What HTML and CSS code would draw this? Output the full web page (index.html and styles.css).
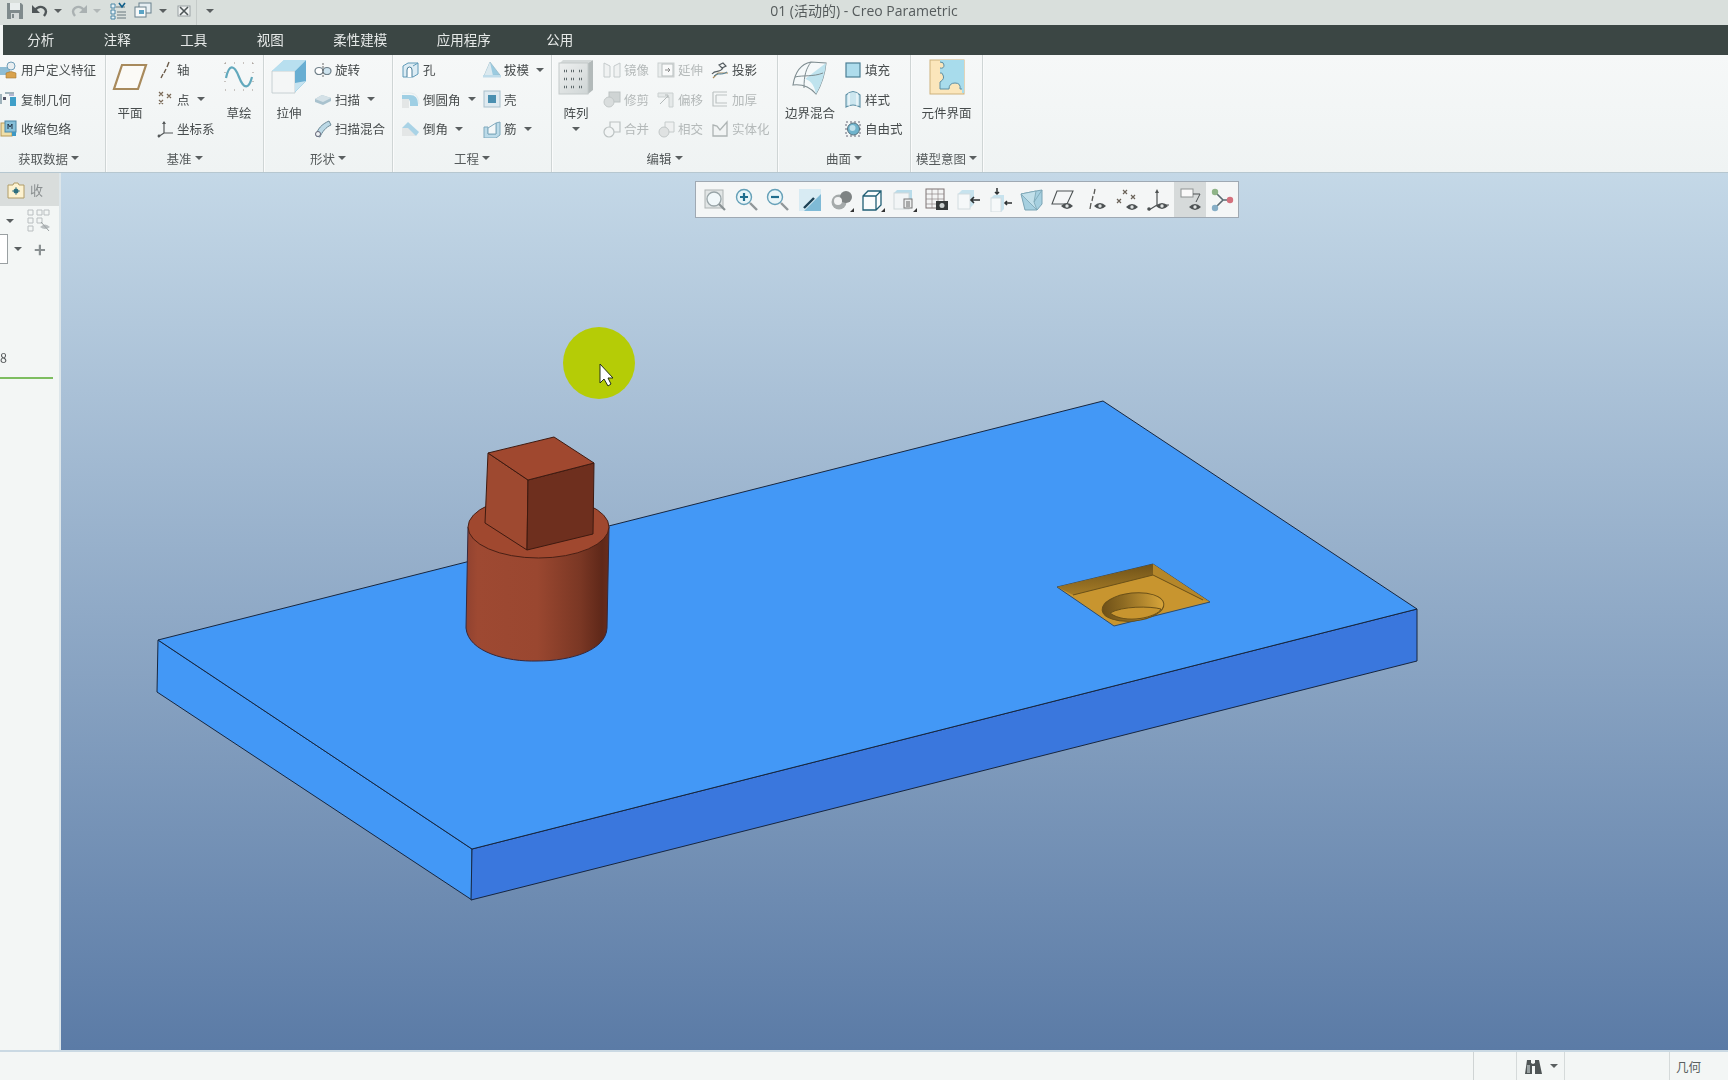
FILE: index.html
```html
<!DOCTYPE html>
<html lang="zh">
<head>
<meta charset="utf-8">
<title>01 (活动的) - Creo Parametric</title>
<link rel="stylesheet" href="styles.css">
</head>
<body>
<svg class="sprite" xmlns="http://www.w3.org/2000/svg">
  <defs>
    <linearGradient id="cyl" x1="0" x2="1" y1="0" y2="0">
      <stop offset="0" stop-color="#904230"/><stop offset=".08" stop-color="#9e4932"/><stop offset=".5" stop-color="#9a4730"/><stop offset=".8" stop-color="#7a3724"/><stop offset=".95" stop-color="#5f2819"/><stop offset="1" stop-color="#682c1c"/>
    </linearGradient>
    <linearGradient id="hole" x1="0" x2="1" y1="0" y2="0">
      <stop offset="0" stop-color="#6e5018"/><stop offset=".35" stop-color="#8d6a22"/><stop offset="1" stop-color="#d8a53a"/>
    </linearGradient>
    <linearGradient id="wall" x1="0" x2="0" y1="0" y2="1">
      <stop offset="0" stop-color="#6f5219"/><stop offset="1" stop-color="#a67c26"/>
    </linearGradient>
    <linearGradient id="patside" x1="0" x2="1" y1="0" y2="1">
      <stop offset="0" stop-color="#eef0f0"/><stop offset="1" stop-color="#cfd5d5"/>
    </linearGradient>
  </defs>
  <symbol id="i-user" viewBox="0 0 18 18"><rect x="0" y="6" width="10" height="8" fill="#8fbdd4"/><circle cx="11" cy="5" r="4" fill="#e9eef0" stroke="#6f9db8"/><path d="M6 17v-5q5-3 10 0v5z" fill="#d9a24c" stroke="#a67a38" stroke-width=".6"/></symbol>
  <symbol id="i-copy" viewBox="0 0 18 18"><path d="M1 4v10M5 3h9" stroke="#4a6e80" fill="none"/><rect x="3" y="7" width="3" height="3" fill="#556"/><rect x="10" y="7" width="6" height="9" fill="#3f9fc8"/><path d="M9 5h5" stroke="#77a" /></symbol>
  <symbol id="i-shrink" viewBox="0 0 18 18"><rect x="1" y="3" width="11" height="13" fill="#f0dfa8" stroke="#b89a58"/><rect x="5" y="1" width="11" height="11" fill="#86bfd8" stroke="#4a87a8"/><path d="M8 9V4l2 3 2-3v5" stroke="#234" fill="none"/><rect x="12" y="12" width="4" height="4" fill="#3d98c4"/></symbol>
  <symbol id="i-plane" viewBox="0 0 36 36"><path d="M10 6h24l-8 24H2z" fill="#fbfaf6" stroke="#a88a5c" stroke-width="2.2"/></symbol>
  <symbol id="i-axis" viewBox="0 0 18 18"><path d="M13 1l-2 5M10 8l-2 4M7 13l-2 4" stroke="#6a5a48" stroke-width="1.4"/></symbol>
  <symbol id="i-point" viewBox="0 0 18 18"><path d="M3 2l4 4M7 2l-4 4M11 4l4 4M15 4l-4 4M3 10l4 4M7 10l-4 4" stroke="#7a6a58" stroke-width="1.2"/></symbol>
  <symbol id="i-csys" viewBox="0 0 18 18"><path d="M8 2v11M8 13l9-0M8 13l-6 4" stroke="#55595a" stroke-width="1.2" fill="none"/><path d="M6 4l2-3 2 3z" fill="#55595a"/><circle cx="3" cy="16" r="1.4" fill="#55595a"/></symbol>
  <symbol id="i-sketch" viewBox="0 0 36 36"><path d="M5 19C8 5 13 5 18 18s10 12 13 0" fill="none" stroke="#62a9bd" stroke-width="2.2"/><path d="M4 4h28M4 31h28" stroke="#9a8f88" stroke-width="1" stroke-dasharray="1 8"/><path d="M4 4v27M32 4v27" stroke="#9a8f88" stroke-width="1" stroke-dasharray="1 8"/></symbol>
  <symbol id="i-extrude" viewBox="0 0 36 36"><path d="M1 12L13 1h22v21L24 33z" fill="#a9d6ea"/><path d="M1 12h23v22H1z" fill="#f4f6f6" stroke="#bcc8cc" stroke-width=".8"/><path d="M24 12L35 1v21L24 33z" fill="#68aed2"/><path d="M24 24l11-2-11 11z" fill="#c6e3f0"/><path d="M1 12L13 1h22L24 12z" fill="#b8dfef"/></symbol>
  <symbol id="i-revolve" viewBox="0 0 18 18"><ellipse cx="5" cy="10" rx="4" ry="3.5" fill="#fff" stroke="#6f7f88" stroke-width="1.2"/><ellipse cx="13" cy="10" rx="4" ry="3.5" fill="#cde3ee" stroke="#6f7f88" stroke-width="1.2"/><path d="M9 2v14" stroke="#666" stroke-dasharray="2 1"/></symbol>
  <symbol id="i-sweep" viewBox="0 0 18 18"><path d="M1 9l7-4 9 3v3l-8 4-8-3z" fill="#a9c2ce"/><path d="M1 9l8 3 8-4-9-3z" fill="#d4e1e7"/></symbol>
  <symbol id="i-blend" viewBox="0 0 18 18"><path d="M2 16C3 9 8 4 15 1l2 4C12 7 8 12 6 17z" fill="#bcd9e6" stroke="#6d8a98"/><circle cx="4" cy="14" r="2.5" fill="#eef3f5" stroke="#667"/></symbol>
  <symbol id="i-hole" viewBox="0 0 18 18"><path d="M1 5l5-3h10v11l-5 3H1z" fill="#dcecf4" stroke="#5f9ab8"/><path d="M5 16V9q0-3 2.500-3T10 9v7" fill="#fff" stroke="#4b7f9a"/><path d="M11 5l5-3" stroke="#5f9ab8"/></symbol>
  <symbol id="i-draft" viewBox="0 0 18 18"><path d="M1 15L7 1l10 13z" fill="#9bcbe0" stroke="#8db0c0" stroke-width=".6"/><path d="M7 1l3 14H1z" fill="#dbe9ef"/><rect x="0" y="14" width="18" height="2.500" fill="#bfdcea"/></symbol>
  <symbol id="i-round" viewBox="0 0 18 18"><path d="M0 5h8q8 0 8 9v2H8V12Q8 9 4 9H0z" fill="#9fcfe4"/><path d="M0 9h7v9H0z" fill="#e3e6e6"/><path d="M0 3h9q8 1 8 11" fill="none" stroke="#e4ecee"/></symbol>
  <symbol id="i-shell" viewBox="0 0 18 18"><rect x="1" y="1" width="16" height="16" fill="#dfeaf0" stroke="#a9c0cc"/><rect x="5" y="5" width="8" height="8" fill="#4a8fb0"/></symbol>
  <symbol id="i-chamfer" viewBox="0 0 18 18"><path d="M0 8l6-6 11 10-3 4z" fill="#a9d3e6"/><path d="M0 8h6l8 8H0z" fill="#e3e6e6"/></symbol>
  <symbol id="i-rib" viewBox="0 0 18 18"><path d="M1 7h4v7h8V3l4-1v13l-4 3H1z" fill="#bcdbe9" stroke="#7fa9bd"/><path d="M5 14V8l8-5v11z" fill="#f3f7f8" stroke="#7fa9bd"/></symbol>
  <symbol id="i-pattern" viewBox="0 0 36 36"><path d="M30 4l5-3v30l-5 4z" fill="#b3baba"/><path d="M2 4l3-3h30l-5 3z" fill="#d4d9d9"/><rect x="1" y="4" width="29" height="31" fill="url(#patside)" stroke="#c4caca"/><path d="M6 12h4M13 12h4M21 12h4M6 20h4M13 20h4M21 20h4M6 28h4M13 28h4M21 28h4" stroke="#5f6a6c" stroke-width="2.400" stroke-dasharray="1 1"/></symbol>
  <symbol id="i-mirror" viewBox="0 0 18 18"><path d="M1 2l6 3v11H1zM17 2l-6 3v11h6z" fill="#f0f2f2" stroke="#bcc3c4"/></symbol>
  <symbol id="i-trim" viewBox="0 0 18 18"><rect x="6" y="2" width="11" height="10" fill="#c9cfcf" stroke="#b3baba"/><circle cx="6" cy="12" r="5" fill="#d5d9d9" stroke="#b9bfbf"/></symbol>
  <symbol id="i-merge" viewBox="0 0 18 18"><path d="M7 2h10v10H7z" fill="#f3f5f5" stroke="#b3baba" stroke-width="1.2"/><circle cx="6" cy="12" r="5" fill="#f3f5f5" stroke="#b3baba" stroke-width="1.2"/></symbol>
  <symbol id="i-extend" viewBox="0 0 18 18"><rect x="1" y="2" width="16" height="14" fill="#e9ecec" stroke="#c3c9c9"/><rect x="5" y="3" width="11" height="12" fill="#fafbfb" stroke="#aeb5b5"/><path d="M8 9h5M11 7l2 2-2 2" stroke="#777" fill="none"/></symbol>
  <symbol id="i-offset" viewBox="0 0 18 18"><path d="M1 3h15v14h-4V7H1z" fill="#e3e7e7" stroke="#c3c9c9"/><path d="M3 14l8-8M8 5h3v3" stroke="#aab0b0" fill="none"/></symbol>
  <symbol id="i-inter" viewBox="0 0 18 18"><path d="M8 2h9v10H8z" fill="#eef0f0" stroke="#bec4c4"/><circle cx="7" cy="12" r="5" fill="#dcdfdf" stroke="#b9bfbf"/></symbol>
  <symbol id="i-project" viewBox="0 0 18 18"><path d="M2 17l5-5h10" fill="none" stroke="#a88a5c" stroke-width="1.200"/><path d="M1 13C5 8 8 13 12 7M8 4l4-2 3 3-4 2z" fill="none" stroke="#545c60" stroke-width="1.200"/><path d="M3 15C7 11 10 15 16 11" fill="none" stroke="#4d7e98"/></symbol>
  <symbol id="i-thick" viewBox="0 0 18 18"><path d="M2 2h14M2 2v14h14M5 5h11M5 5v8h11" fill="none" stroke="#b3baba" stroke-width="1.200"/></symbol>
  <symbol id="i-solid" viewBox="0 0 18 18"><path d="M2 5l4 1 3 4 7-8v14H2z" fill="#f2f4f4" stroke="#a2a9a9" stroke-width="1.300"/></symbol>
  <symbol id="i-boundary" viewBox="0 0 36 36"><path d="M1 26C3 13 9 5 19 3l15 1c-1 10-4 21-10 31-6-7-14-10-23-9z" fill="#f5f9fa" stroke="#7e8c90" stroke-width="1.100"/><path d="M13 20c4 1 9 4 11 15 6-10 9-21 10-31z" fill="#bfe3ee"/><path d="M19 3C14 10 12 16 12 29M3 18c8-2 18 0 28-4" fill="none" stroke="#7e8c90" stroke-width="1"/></symbol>
  <symbol id="i-fill" viewBox="0 0 18 18"><rect x="2" y="2" width="14" height="14" fill="#aedcec" stroke="#4b7f95" stroke-width="1.200"/></symbol>
  <symbol id="i-style" viewBox="0 0 18 18"><path d="M2 5q7-7 14 0v12q-7-4-14 0z" fill="#cce6ef" stroke="#5c8ea4" stroke-width="1.100"/><path d="M5 3v13M13 3v13" stroke="#fff"/></symbol>
  <symbol id="i-free" viewBox="0 0 18 18"><rect x="2" y="2" width="14" height="14" fill="none" stroke="#667" stroke-dasharray="2 2"/><circle cx="9.500" cy="9" r="6" fill="#6fb3cc" stroke="#54707d"/><circle cx="8.500" cy="8" r="3" fill="#bfe1ec"/></symbol>
  <symbol id="i-comp" viewBox="0 0 36 36"><rect x="1" y="1" width="34" height="34" fill="#fbe6bb" stroke="#cdb27c"/><path d="M11 1H35V34H33V30H31q1-6-5-6t-6 6H11V23q5-3 3-7-1-3-3-2V9q4 1 4-3-1-3-4-3z" fill="#a8dcec"/><path d="M11 3q4 0 4 3 0 4-4 3M11 14q2-1 3 2 2 4-3 7v7h9q0-6 6-6t5 6h2" fill="none" stroke="#5c8ea4"/></symbol>
  <symbol id="i-save" viewBox="0 0 18 18"><path d="M1 1h14l2 2v14H1z" fill="#7f8a8c"/><rect x="4" y="1" width="10" height="7" fill="#e9eeee"/><rect x="5" y="11" width="8" height="6" fill="#d4d9d9"/><rect x="6" y="12" width="2" height="4" fill="#7f8a8c"/></symbol>
  <symbol id="i-undo" viewBox="0 0 18 18"><path d="M4 8q4-5 9-2 4 3 0 8" fill="none" stroke="#4f5658" stroke-width="2.400"/><path d="M1 3v8h8z" fill="#4f5658"/></symbol>
  <symbol id="i-redo" viewBox="0 0 18 18"><path d="M14 8q-4-5-9-2-4 3 0 8" fill="none" stroke="#aab1b2" stroke-width="2.400"/><path d="M17 3v8H9z" fill="#aab1b2"/></symbol>
  <symbol id="i-regen" viewBox="0 0 18 18"><path d="M2 2h4v4H2zM2 8h4v4H2zM2 14h4v3H2z" fill="#e8f2f7" stroke="#4b86a6"/><path d="M7 5h9M8 10h9M8 13h9M8 16h9" stroke="#68797f"/><path d="M10 1l3 4 3-4" stroke="#0f5e8a" stroke-width="1.600" fill="none"/></symbol>
  <symbol id="i-windows" viewBox="0 0 18 18"><rect x="5" y="1" width="12" height="10" fill="#e6eef2" stroke="#69808c"/><rect x="1" y="5" width="11" height="10" fill="#f7f9f9" stroke="#69808c"/><rect x="5" y="8" width="5" height="4" fill="#5aa3c5"/></symbol>
  <symbol id="i-close" viewBox="0 0 18 18"><rect x="3" y="4" width="12" height="10" fill="#eef1f1" stroke="#9aa1a3"/><path d="M5 5l8 8M13 5l-8 8" stroke="#4e5658" stroke-width="1.600"/></symbol>
  <symbol id="i-folder" viewBox="0 0 18 18"><path d="M1 4h5l1-2h4l1 2h5v13H1z" fill="#fdf2d0" stroke="#b09c68"/><circle cx="9" cy="10" r="2.500" fill="#2f6f7e"/><path d="M9 6v8M5 10h8" stroke="#2f6f7e" stroke-width=".8"/></symbol>
  <symbol id="i-tree" viewBox="0 0 24 24"><path d="M2 1h5v5H2zM2 9h5v5H2zM2 17h5v5H2zM11 1h5v5h-5zM18 1h5v5h-5zM11 9h5v5h-5z" fill="none" stroke="#b9bec0"/><path d="M14 18q5-5 10 0-5 4-10 0z" fill="#b9bec0"/><path d="M15 13l8 9" stroke="#9aa0a2"/></symbol>
  <symbol id="i-bino" viewBox="0 0 18 18"><path d="M3 3h4v3l2 1 2-1V3h4l3 14h-7V9H8v8H1z" fill="#4f5556"/><path d="M3 8h3v8H3z" fill="#9aa2a3"/></symbol>
  <symbol id="t-eye" viewBox="0 0 12 8"><path d="M0 4q6-6 12 0-6 6-12 0z" fill="#4c5152"/><circle cx="6" cy="4" r="1.700" fill="#dfe3e3"/></symbol>
  <symbol id="t-refit" viewBox="0 0 24 24"><rect x="2" y="2" width="18" height="18" fill="#e2e6e6" stroke="#aeb4b4"/><circle cx="11" cy="11" r="7" fill="#f1f8fa" stroke="#99a5a8" stroke-width="1.300"/><path d="M16 16l6 6" stroke="#8a9294" stroke-width="2.200"/></symbol>
  <symbol id="t-zin" viewBox="0 0 24 24"><circle cx="9" cy="9" r="7.500" fill="#e9f5f8" stroke="#65a0b8" stroke-width="1.400"/><path d="M5 9h8M9 5v8" stroke="#216e8e" stroke-width="2.200"/><path d="M15 15l7 7" stroke="#909799" stroke-width="2.400"/></symbol>
  <symbol id="t-zout" viewBox="0 0 24 24"><circle cx="9" cy="9" r="7.500" fill="#e9f5f8" stroke="#65a0b8" stroke-width="1.400"/><path d="M5 9h8" stroke="#216e8e" stroke-width="2.200"/><path d="M15 15l7 7" stroke="#909799" stroke-width="2.400"/></symbol>
  <symbol id="t-repaint" viewBox="0 0 24 24"><rect x="1" y="1" width="22" height="22" fill="#7fbad6"/><path d="M1 1h22v5L6 23H1z" fill="#d8ebf3"/><path d="M6 20l10-10" stroke="#1d4154" stroke-width="2.400"/></symbol>
  <symbol id="t-shade" viewBox="0 0 24 24"><circle cx="9" cy="14" r="7.500" fill="#a5aaaa"/><circle cx="16" cy="9" r="6" fill="#7e8383"/><circle cx="8" cy="13" r="4" fill="#f2f3f3"/><path d="M24 20v4h-4z" fill="#333"/></symbol>
  <symbol id="t-cube" viewBox="0 0 24 24"><path d="M2 8l5-5h13v14l-5 5H2zM2 8h13v14M15 8l5-5" fill="#fafcfc" stroke="#215f75" stroke-width="1.300"/><path d="M24 20v4h-4z" fill="#333"/></symbol>
  <symbol id="t-saved" viewBox="0 0 24 24"><path d="M1 5l3-3h15v16H1z" fill="#b9dcea"/><rect x="1" y="5" width="15" height="16" fill="#f2f5f6" stroke="#cfd8da"/><rect x="11" y="11" width="8" height="9" fill="#eceeee" stroke="#777"/><path d="M13 14h4M13 16h4M13 18h4" stroke="#666"/><path d="M24 20v4h-4z" fill="#333"/></symbol>
  <symbol id="t-table" viewBox="0 0 24 24"><rect x="1" y="1" width="18" height="19" fill="#f3f4f4" stroke="#7c7272"/><path d="M1 6h18M1 11h18M1 16h18M7 1v19M13 1v19" stroke="#8c8484" stroke-width=".7"/><rect x="11" y="13" width="12" height="9" fill="#35393a"/><circle cx="17" cy="17.500" r="2.500" fill="#cbd0d0"/></symbol>
  <symbol id="t-view1" viewBox="0 0 24 24"><path d="M2 6l4-4h12v14l-4 4H2z" fill="#c7e3ee"/><rect x="2" y="6" width="12" height="15" fill="#f5f8f9" stroke="#d2dcdf"/><path d="M24 12h-9M18 9l-3 3 3 3" stroke="#2d3132" stroke-width="1.600" fill="none"/></symbol>
  <symbol id="t-view2" viewBox="0 0 24 24"><path d="M3 10l3-3h10v14l-3 3H3z" fill="#c7e3ee"/><rect x="3" y="10" width="10" height="14" fill="#f5f8f9" stroke="#d2dcdf"/><path d="M24 15h-7M19 13l-2 2 2 2M9 0v6M7 4l2 2 2-2" stroke="#2d3132" stroke-width="1.500" fill="none"/></symbol>
  <symbol id="t-crystal" viewBox="0 0 24 24"><path d="M1 6l15-3 6-1v14l-5 6H5z" fill="#a6d0e0" stroke="#7aa4b4"/><path d="M1 6l15-3-2 11 3 8zM14 14l8-12" fill="#c2e0ea" stroke="#7aa4b4" stroke-width=".8"/></symbol>
  <symbol id="t-plane" viewBox="0 0 24 24"><path d="M6 3h16l-6 13H1z" fill="none" stroke="#4d5354" stroke-width="1.100"/><use href="#t-eye" x="10" y="14" width="12" height="8"/></symbol>
  <symbol id="t-axis" viewBox="0 0 24 24"><path d="M12 1l-1 5M10 8l-1 5M8 15l-1 6" stroke="#5a5a56" stroke-width="1.300"/><use href="#t-eye" x="11" y="14" width="12" height="8"/></symbol>
  <symbol id="t-point" viewBox="0 0 24 24"><path d="M8 2l4 4M12 2l-4 4M16 7l4 4M20 7l-4 4M2 11l4 4M6 11l-4 4" stroke="#6a6258" stroke-width="1.200"/><use href="#t-eye" x="11" y="15" width="12" height="8"/></symbol>
  <symbol id="t-csys" viewBox="0 0 24 24"><path d="M11 3v14M11 17h12M11 17l-8 5" stroke="#4c5152" stroke-width="1.200" fill="none"/><path d="M9 5l2-4 2 4z" fill="#4c5152"/><circle cx="3" cy="21" r="1.800" fill="#4c5152"/><use href="#t-eye" x="10" y="14" width="12" height="8"/></symbol>
  <symbol id="t-box" viewBox="0 0 24 24"><rect x="3" y="1" width="12" height="8" fill="#fafafa" stroke="#8d9292"/><path d="M15 6h7l-4 8" fill="none" stroke="#4c5152"/><use href="#t-eye" x="11" y="15" width="12" height="8"/></symbol>
  <symbol id="t-graph" viewBox="0 0 24 24"><path d="M5 4l8 8-8 8M13 12h7" fill="none" stroke="#5a6a70" stroke-width="1.600"/><circle cx="5" cy="4" r="3.200" fill="#8fb488"/><circle cx="5" cy="20" r="3.200" fill="#86aec6"/><circle cx="20" cy="12" r="3.200" fill="#d4707c"/></symbol>
</svg>

<header class="titlebar">
  <div class="qat">
    <svg class="qi"><use href="#i-save"/></svg>
    <svg class="qi"><use href="#i-undo"/></svg><i class="caret q-caret"></i>
    <svg class="qi"><use href="#i-redo"/></svg><i class="caret q-caret faint"></i>
    <svg class="qi"><use href="#i-regen"/></svg>
    <svg class="qi q-wide"><use href="#i-windows"/></svg><i class="caret q-caret"></i>
    <svg class="qi"><use href="#i-close"/></svg>
    <span class="qsep"></span>
    <i class="caret q-caret q-more"></i>
  </div>
  <div class="title">01 (活动的) - Creo Parametric</div>
</header>

<nav class="tabs">
  <span class="tab">分析</span><span class="tab">注释</span><span class="tab">工具</span><span class="tab">视图</span><span class="tab">柔性建模</span><span class="tab">应用程序</span><span class="tab tab-last">公用</span>
</nav>

<section class="ribbon">
  <div class="group g1">
    <div class="body">
      <div class="col">
        <div class="item"><svg class="ic"><use href="#i-user"/></svg><span>用户定义特征</span></div>
        <div class="item"><svg class="ic"><use href="#i-copy"/></svg><span>复制几何</span></div>
        <div class="item"><svg class="ic"><use href="#i-shrink"/></svg><span>收缩包络</span></div>
      </div>
    </div>
    <div class="glabel">获取数据<i class="caret"></i></div>
  </div>
  <div class="group g2">
    <div class="body">
      <div class="big w48"><svg class="big-ic"><use href="#i-plane"/></svg><span>平面</span></div>
      <div class="col c2">
        <div class="item"><svg class="ic"><use href="#i-axis"/></svg><span>轴</span></div>
        <div class="item"><svg class="ic"><use href="#i-point"/></svg><span>点</span><i class="caret"></i></div>
        <div class="item"><svg class="ic"><use href="#i-csys"/></svg><span>坐标系</span></div>
      </div>
      <div class="big w48"><svg class="big-ic"><use href="#i-sketch"/></svg><span>草绘</span></div>
    </div>
    <div class="glabel">基准<i class="caret"></i></div>
  </div>
  <div class="group g3">
    <div class="body">
      <div class="big w50"><svg class="big-ic"><use href="#i-extrude"/></svg><span>拉伸</span></div>
      <div class="col">
        <div class="item"><svg class="ic"><use href="#i-revolve"/></svg><span>旋转</span></div>
        <div class="item"><svg class="ic"><use href="#i-sweep"/></svg><span>扫描</span><i class="caret"></i></div>
        <div class="item"><svg class="ic"><use href="#i-blend"/></svg><span>扫描混合</span></div>
      </div>
    </div>
    <div class="glabel">形状<i class="caret"></i></div>
  </div>
  <div class="group g4">
    <div class="body">
      <div class="col c4">
        <div class="item"><svg class="ic"><use href="#i-hole"/></svg><span>孔</span></div>
        <div class="item"><svg class="ic"><use href="#i-round"/></svg><span>倒圆角</span><i class="caret"></i></div>
        <div class="item"><svg class="ic"><use href="#i-chamfer"/></svg><span>倒角</span><i class="caret"></i></div>
      </div>
      <div class="col">
        <div class="item"><svg class="ic"><use href="#i-draft"/></svg><span>拔模</span><i class="caret"></i></div>
        <div class="item"><svg class="ic"><use href="#i-shell"/></svg><span>壳</span></div>
        <div class="item"><svg class="ic"><use href="#i-rib"/></svg><span>筋</span><i class="caret"></i></div>
      </div>
    </div>
    <div class="glabel">工程<i class="caret"></i></div>
  </div>
  <div class="group g5">
    <div class="body">
      <div class="big w48"><svg class="big-ic"><use href="#i-pattern"/></svg><span>阵列</span><i class="caret big-caret"></i></div>
      <div class="col c5 first off">
        <div class="item"><svg class="ic"><use href="#i-mirror"/></svg><span>镜像</span></div>
        <div class="item"><svg class="ic"><use href="#i-trim"/></svg><span>修剪</span></div>
        <div class="item"><svg class="ic"><use href="#i-merge"/></svg><span>合并</span></div>
      </div>
      <div class="col c5 off">
        <div class="item"><svg class="ic"><use href="#i-extend"/></svg><span>延伸</span></div>
        <div class="item"><svg class="ic"><use href="#i-offset"/></svg><span>偏移</span></div>
        <div class="item"><svg class="ic"><use href="#i-inter"/></svg><span>相交</span></div>
      </div>
      <div class="col c5">
        <div class="item"><svg class="ic"><use href="#i-project"/></svg><span>投影</span></div>
        <div class="item off"><svg class="ic"><use href="#i-thick"/></svg><span>加厚</span></div>
        <div class="item off"><svg class="ic"><use href="#i-solid"/></svg><span>实体化</span></div>
      </div>
    </div>
    <div class="glabel">编辑<i class="caret"></i></div>
  </div>
  <div class="group g6">
    <div class="body">
      <div class="big w64"><svg class="big-ic"><use href="#i-boundary"/></svg><span>边界混合</span></div>
      <div class="col c6">
        <div class="item"><svg class="ic"><use href="#i-fill"/></svg><span>填充</span></div>
        <div class="item"><svg class="ic"><use href="#i-style"/></svg><span>样式</span></div>
        <div class="item"><svg class="ic"><use href="#i-free"/></svg><span>自由式</span></div>
      </div>
    </div>
    <div class="glabel">曲面<i class="caret"></i></div>
  </div>
  <div class="group g7">
    <div class="body">
      <div class="big w71"><svg class="big-ic"><use href="#i-comp"/></svg><span>元件界面</span></div>
    </div>
    <div class="glabel">模型意图<i class="caret"></i></div>
  </div>
</section>

<main class="main">
  <aside class="side">
    <div class="side-head"><svg class="folder"><use href="#i-folder"/></svg><span class="side-tab">收</span></div>
    <div class="side-row r1"><i class="caret"></i><svg class="tree"><use href="#i-tree"/></svg></div>
    <div class="side-row r2"><span class="input"></span><i class="caret"></i><span class="plus">+</span></div>
    <div class="side-num">8</div>
    <div class="side-line"></div>
  </aside>
  <div class="viewport">
    <svg class="model" viewBox="61 173 1667 877" xmlns="http://www.w3.org/2000/svg">
      <g stroke="#17263f" stroke-width="1" stroke-linejoin="round">
        <path d="M158 640L472 849V900L157 692Z" fill="#4398f6"/>
        <path d="M472 849L1417 609V661L471 900Z" fill="#3a77dd"/>
        <path d="M158 640L1103 401L1417 609L472 849Z" fill="#4398f6"/>
      </g>
      <path d="M1057 587L1153 564L1210 602L1114 626Z" fill="#c8952f" stroke="#2c4a6a" stroke-width="1"/>
      <path d="M1057 587L1153 564V575L1073 595Z" fill="url(#wall)"/>
      <path d="M1153 564L1210 602L1203 600L1153 575Z" fill="#b5872a"/>
      <path d="M1153 575L1203 600M1073 595L1153 575" stroke="#6a5018" stroke-width="1" fill="none"/>
      <ellipse cx="1133" cy="607" rx="31" ry="14" transform="rotate(-6 1133 607)" fill="url(#hole)" stroke="#6a5018"/>
      <path d="M1110 613C1122 606 1150 606 1161 609C1158 617 1125 625 1110 613Z" fill="#c8952f" stroke="#6a5018"/>
      <path d="M466 628C468 652 507 662 537 661C572 661 606 650 607 628L609 527H468Z" fill="url(#cyl)" stroke="#34293f" stroke-width="1"/>
      <ellipse cx="538.500" cy="527" rx="70.500" ry="31" fill="#a0482f" stroke="#4a2015" stroke-width="1"/>
      <g stroke="#3e1a10" stroke-width="1" stroke-linejoin="round">
        <path d="M488 453L528 480L527 550L485 523Z" fill="#9e4930"/>
        <path d="M528 480L594 463L593 534L527 550Z" fill="#6e2f1e"/>
        <path d="M488 453L554 437L594 463L528 480Z" fill="#a0482f"/>
      </g>
      <circle cx="599" cy="363" r="36" fill="#b5cc06"/>
      <path d="M600 364V383L604 379L608 386L611 384L608 378H613Z" fill="#fff" stroke="#243018" stroke-width="1"/>
    </svg>
    <div class="viewbar">
      <span class="vb"><svg><use href="#t-refit"/></svg></span>
      <span class="vb"><svg><use href="#t-zin"/></svg></span>
      <span class="vb"><svg><use href="#t-zout"/></svg></span>
      <span class="vb"><svg><use href="#t-repaint"/></svg></span>
      <span class="vb"><svg><use href="#t-shade"/></svg></span>
      <span class="vb"><svg><use href="#t-cube"/></svg></span>
      <span class="vb"><svg><use href="#t-saved"/></svg></span>
      <span class="vb"><svg><use href="#t-table"/></svg></span>
      <span class="vb"><svg><use href="#t-view1"/></svg></span>
      <span class="vb"><svg><use href="#t-view2"/></svg></span>
      <span class="vb"><svg><use href="#t-crystal"/></svg></span>
      <span class="vb"><svg><use href="#t-plane"/></svg></span>
      <span class="vb"><svg><use href="#t-axis"/></svg></span>
      <span class="vb"><svg><use href="#t-point"/></svg></span>
      <span class="vb"><svg><use href="#t-csys"/></svg></span>
      <span class="vb vb-on"><svg><use href="#t-box"/></svg></span>
      <span class="vb"><svg><use href="#t-graph"/></svg></span>
    </div>
  </div>
</main>

<footer class="status">
  <span class="st-sep"></span>
  <span class="st-find"><svg class="bino"><use href="#i-bino"/></svg><i class="caret"></i></span>
  <span class="st-filter">几何</span>
</footer>
</body>
</html>
```

FILE: styles.css
```css
* { box-sizing: border-box; }
html, body { margin: 0; padding: 0; }
body {
  width: 1728px;
  height: 1080px;
  overflow: hidden;
  display: flex;
  flex-direction: column;
  background: #f3f6f5;
  color: #474c4d;
  font-family: "Noto Sans CJK SC", "Noto Sans", sans-serif;
  font-size: 12.5px;
}
.sprite { position: absolute; width: 0; height: 0; }

.titlebar {
  height: 25px;
  flex: none;
  background: #d9dfdc;
  display: grid;
  grid-template-columns: 1fr auto 1fr;
  align-items: start;
  filter: blur(.3px);
}
.qat {
  grid-column: 1;
  grid-row: 1;
  display: flex;
  align-items: center;
  height: 21px;
  padding-left: 6px;
}
.qi { width: 18px; height: 18px; margin-right: 7px; flex: none; }
.q-wide { margin-right: 9px; }
.q-caret { margin: 0 8px 0 -2px; }
.q-caret.faint { border-top-color: #b2b8b8; }
.qsep { width: 1px; height: 25px; background: #c5cbc9; margin: 0 9px 0 -4px; flex: none; align-self: flex-start; }
.q-more { margin: 0; }
.title {
  grid-column: 2;
  grid-row: 1;
  font-family: "Open Sans", "Noto Sans CJK SC", sans-serif;
  font-size: 14px;
  line-height: 21px;
  color: #555b5c;
  white-space: nowrap;
}

.tabs {
  height: 30px;
  flex: none;
  margin-left: 3px;
  background: #3b4644;
  display: flex;
  align-items: center;
  gap: 1px;
  filter: blur(.3px);
}
.tab { padding: 0 24.25px 2px; color: #e6e9e8; font-size: 13.5px; line-height: 28px; white-space: nowrap; }
.tab-last { margin-left: 6px; }

.ribbon {
  height: 118px;
  flex: none;
  display: flex;
  background: linear-gradient(#f6f8f8, #eff3f3);
  border-bottom: 1px solid #b6c7d0;
  filter: blur(.3px);
}
.group {
  display: flex;
  flex-direction: column;
  border-right: 1px solid #cfd5d5;
  box-shadow: 1px 0 0 #fafbfb;
}
.g1 { width: 106px; }
.g2 { width: 158px; }
.g3 { width: 129px; }
.g4 { width: 159px; padding-left: 9px; }
.g5 { width: 226px; }
.g6 { width: 133px; }
.g7 { width: 72px; }
.body { height: 90px; display: flex; flex: none; }
.glabel {
  flex: 1;
  display: flex;
  align-items: center;
  justify-content: center;
  gap: 3px;
  color: #555a5b;
  white-space: nowrap;
  padding-bottom: 1px;
}
.g1 .glabel { padding-right: 8px; }
.g4 .glabel { margin-left: -9px; }
.col { display: flex; flex-direction: column; flex: none; }
.c2 { width: 59px; margin-left: 2px; }
.c4 { width: 81px; }
.c5 { width: 54px; }
.c5.first { margin-left: 3px; }
.c6 { margin-left: 2px; }
.item {
  height: 29.5px;
  display: flex;
  align-items: center;
  gap: 3px;
  white-space: nowrap;
}
.item .caret { margin-left: 4px; }
.off { color: #b4b9b9; }
.ic { width: 18px; height: 18px; flex: none; }
.off .ic { opacity: .85; }
.big {
  display: flex;
  flex-direction: column;
  align-items: center;
  flex: none;
  padding-top: 4px;
  white-space: nowrap;
}
.big-ic { width: 36px; height: 36px; flex: none; }
.big span { margin-top: 9px; line-height: 18px; }
.big-caret { margin-top: 5px; }
.w48 { width: 48px; }
.w50 { width: 50px; }
.w64 { width: 64px; }
.w71 { width: 71px; }

.caret {
  display: inline-block;
  width: 0;
  height: 0;
  flex: none;
  border-left: 4px solid transparent;
  border-right: 4px solid transparent;
  border-top: 4px solid #5a5f60;
}

.main { flex: 1; display: flex; min-height: 0; }
.side {
  width: 61px;
  flex: none;
  background: #f3f6f5;
  display: flex;
  flex-direction: column;
  border-right: 2px solid #dde6ea;
  filter: blur(.3px);
}
.side-head {
  height: 33px;
  background: #d9dddc;
  display: flex;
  align-items: center;
  padding-left: 7px;
  gap: 5px;
}
.folder { width: 18px; height: 18px; }
.side-tab { color: #8a8f90; font-size: 13px; }
.side-row { display: flex; align-items: center; }
.r1 { height: 28px; margin-top: 1px; padding-left: 6px; gap: 12px; }
.tree { width: 24px; height: 24px; }
.r2 { height: 30px; margin-top: -1px; }
.input {
  width: 8px;
  height: 30px;
  background: #fff;
  border: 1px solid #9aa0a2;
  border-left: 0;
}
.r2 .caret { margin-left: 6px; }
.plus { font-size: 20px; font-weight: 700; color: #8a9092; margin-left: 12px; line-height: 20px; }
.side-num { margin-top: 85px; color: #55595a; font-size: 12.5px; line-height: 18px; }
.side-line { height: 2px; background: #7dbd60; margin-top: 10px; width: 53px; }

.viewport {
  flex: 1;
  position: relative;
  background: linear-gradient(#c4d8e7, #5b7ba6);
  min-width: 0;
}
.model { display: block; width: 100%; height: 100%; filter: blur(.3px); }
.viewbar {
  position: absolute;
  left: 634px;
  top: 8px;
  width: 544px;
  height: 37px;
  display: flex;
  padding-left: 3px;
  background: #f4f6f6;
  border: 1px solid #9fa9b3;
  filter: blur(.3px);
}
.vb { width: 31.7px; height: 35px; flex: none; display: flex; align-items: center; justify-content: center; }
.vb svg { width: 24px; height: 24px; }
.vb-on { background: #d6dada; }

.status {
  height: 30px;
  flex: none;
  display: flex;
  align-items: stretch;
  background: #f3f6f5;
  border-top: 2px solid #cad9e3;
  padding-left: 1473px;
}
.st-sep { width: 1px; background: #cfd4d4; }
.st-find {
  margin-left: 42px;
  width: 49px;
  display: flex;
  align-items: center;
  padding-left: 7px;
  gap: 8px;
  border-left: 1px solid #d5dada;
  border-right: 1px solid #d5dada;
}
.bino { width: 18px; height: 18px; }
.st-filter {
  margin-left: 104px;
  flex: 1;
  display: flex;
  align-items: center;
  padding-left: 6px;
  border-left: 1px solid #d5dada;
  color: #5a5f60;
}
```
